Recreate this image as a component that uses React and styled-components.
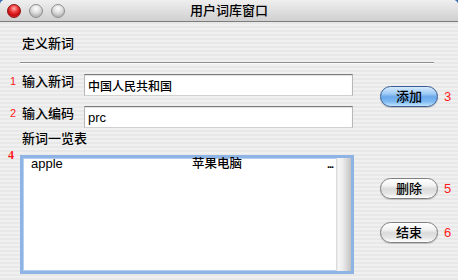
import React from "react";
import styled, { createGlobalStyle } from "styled-components";

const Global = createGlobalStyle`
  html, body { margin: 0; padding: 0; background: #3a6db4; }
  body { font-family: "Liberation Sans", "Noto Sans CJK SC", sans-serif; }
  * { box-sizing: border-box; }
`;

const Window = styled.div`
  width: 458px;
  height: 280px;
  overflow: hidden;
  border-radius: 5px 5px 0 0;
  background: repeating-linear-gradient(to bottom, #f0f0f0 0 2px, #e8e8e8 2px 4px);
  display: flex;
  flex-direction: column;
`;

const TitleBar = styled.div`
  height: 22px;
  flex: none;
  display: grid;
  grid-template-columns: 1fr auto 1fr;
  align-items: center;
  background: linear-gradient(to bottom, #efefef, #d0d0d0);
  border-bottom: 1px solid #7b7b7b;
`;

const Lights = styled.div`
  display: flex;
  gap: 8px;
  padding-left: 7px;
`;

const Light = styled.span`
  width: 14px;
  height: 14px;
  border-radius: 50%;
  border: 1px solid ${(p) => (p.$red ? "#8a1414" : "#8e8e8e")};
  background: ${(p) =>
    p.$red
      ? "radial-gradient(circle at 50% 30%, #ffb0b0 0%, #f04040 35%, #c80c0c 65%, #e85050 100%)"
      : "radial-gradient(circle at 50% 30%, #ffffff 0%, #dcdcdc 45%, #b4b4b4 75%, #e4e4e4 100%)"};
`;

const Title = styled.div`
  font-size: 13px;
  line-height: 21px;
  font-weight: 500;
  color: #000;
`;

const Heading = styled.div`
  margin: 14px 0 0 22px;
  font-size: 13px;
  line-height: 16px;
  font-weight: 500;
  color: #000;
`;

const Separator = styled.div`
  margin: 10px 24px 0 20px;
  height: 1px;
  background: #8e8e8e;
  box-shadow: 0 1px 0 #fbfbfb;
`;

const Form = styled.div`
  margin-top: 11px;
  display: grid;
  grid-template-columns: 20px 64px 270px 26px 58px 1fr;
  grid-template-rows: 22px 10px 22px 22px auto;
`;

const Num = styled.span`
  color: #ff1a1a;
  font-size: ${(p) => p.$size || 11}px;
  font-family: ${(p) => (p.$serif ? '"Liberation Serif", serif' : '"Liberation Sans", sans-serif')};
  font-weight: ${(p) => (p.$serif ? 700 : 400)};
  line-height: 14px;
`;

const NumCell = styled(Num)`
  grid-column: 1;
  grid-row: ${(p) => p.$row};
  padding-left: ${(p) => p.$pad}px;
  align-self: start;
  margin-top: ${(p) => p.$top || 0}px;
`;

const Label = styled.div`
  grid-column: ${(p) => p.$cols || "2"};
  grid-row: ${(p) => p.$row};
  padding-left: 2px;
  font-size: 13px;
  line-height: 14px;
  font-weight: 500;
  align-self: ${(p) => p.$align || "start"};
  margin-top: ${(p) => p.$top || 0}px;
  color: #000;
`;

const Field = styled.input`
  grid-column: 3;
  grid-row: ${(p) => p.$row};
  width: 269px;
  height: 22px;
  margin: 0;
  padding: 0 0 0 3px;
  border: 1px solid;
  border-color: #7a7a7a #b8b8b8 #d0d0d0 #b8b8b8;
  box-shadow: inset 0 1px 1px rgba(0, 0, 0, 0.12);
  background: #fff;
  font-family: "Liberation Sans", "Noto Sans CJK SC", sans-serif;
  font-size: ${(p) => p.$size}px;
  font-weight: 500;
  color: #000;
  outline: none;
`;

const ActionRow = styled.div`
  grid-column: 5 / 7;
  display: flex;
  align-items: center;
  gap: 6px;
`;

const TopAction = styled(ActionRow)`
  grid-row: 1 / 5;
  align-self: start;
  margin-top: 12px;
`;

const ActionColumn = styled.div`
  grid-column: 5 / 7;
  grid-row: 5;
  display: flex;
  flex-direction: column;
  gap: 23px;
  padding-top: 28px;
`;

const AquaButton = styled.button`
  width: 58px;
  height: 21px;
  flex: none;
  margin: 0;
  padding: 0;
  border-radius: 11px;
  border: 1px solid ${(p) => (p.$default ? "#3a5c92" : "#7f7f7f")};
  background: ${(p) =>
    p.$default
      ? "linear-gradient(to bottom, #d6ebff 0%, #9fcbf5 35%, #6aa8ea 52%, #7fbaf2 78%, #c4e6ff 100%)"
      : "linear-gradient(to bottom, #ffffff 0%, #f2f2f2 35%, #dadada 52%, #e6e6e6 78%, #ffffff 100%)"};
  box-shadow: 0 1px 1px rgba(0, 0, 0, 0.18);
  font-family: "Liberation Sans", "Noto Sans CJK SC", sans-serif;
  font-size: 13px;
  font-weight: 500;
  line-height: 19px;
  color: #000;
`;

const ListBox = styled.div`
  grid-column: 2 / 4;
  grid-row: 5;
  margin-top: 5px;
  height: 119px;
  width: 334px;
  display: flex;
  background: #fff;
  border: 3px solid #8db4e4;
  box-shadow: inset 0 0 0 1px #b5cfef;
`;

const ListBody = styled.div`
  flex: 1;
  display: flex;
  flex-direction: column;
`;

const ListRow = styled.div`
  display: grid;
  grid-template-columns: 169px 135px 1fr;
  font-size: 13px;
  line-height: 12px;
  padding-left: 8px;
  color: #000;
`;

const Word = styled.span``;

const Meaning = styled.span`
  margin-left: -8px;
  font-size: 12.5px;
  font-weight: 500;
`;

const More = styled.span`
  font-size: 11px;
  font-weight: 700;
  letter-spacing: -1px;
  margin-left: -8px;
`;

const ScrollTrack = styled.div`
  width: 15px;
  flex: none;
  background: linear-gradient(to right, #d4d4d4 0%, #f6f6f6 15%, #ececec 45%, #d2d2d2 80%, #c2c2c2 100%);
`;

export default function App() {
  return (
    <>
      <Global />
      <Window>
        <TitleBar>
          <Lights>
            <Light $red />
            <Light />
            <Light />
          </Lights>
          <Title>用户词库窗口</Title>
          <span />
        </TitleBar>
        <Heading>定义新词</Heading>
        <Separator />
        <Form>
          <NumCell $row={1} $pad={10}>1</NumCell>
          <Label $row={1} $top={1}>输入新词</Label>
          <Field $row={1} $size={12} defaultValue="中国人民共和国" readOnly />

          <NumCell $row={3} $pad={10}>2</NumCell>
          <Label $row={3} $top={1}>输入编码</Label>
          <Field $row={3} $size={13} defaultValue="prc" readOnly />

          <TopAction>
            <AquaButton $default>添加</AquaButton>
            <Num $size={13}>3</Num>
          </TopAction>

          <Label $row={4} $cols="2 / 4" $align="center">新词一览表</Label>

          <NumCell $row={5} $pad={8} $serif $size={12} $top={-2}>4</NumCell>
          <ListBox>
            <ListBody>
              <ListRow>
                <Word>apple</Word>
                <Meaning>苹果电脑</Meaning>
                <More>...</More>
              </ListRow>
            </ListBody>
            <ScrollTrack />
          </ListBox>

          <ActionColumn>
            <ActionRow>
              <AquaButton>删除</AquaButton>
              <Num $size={13}>5</Num>
            </ActionRow>
            <ActionRow>
              <AquaButton>结束</AquaButton>
              <Num $size={13}>6</Num>
            </ActionRow>
          </ActionColumn>
        </Form>
      </Window>
    </>
  );
}
